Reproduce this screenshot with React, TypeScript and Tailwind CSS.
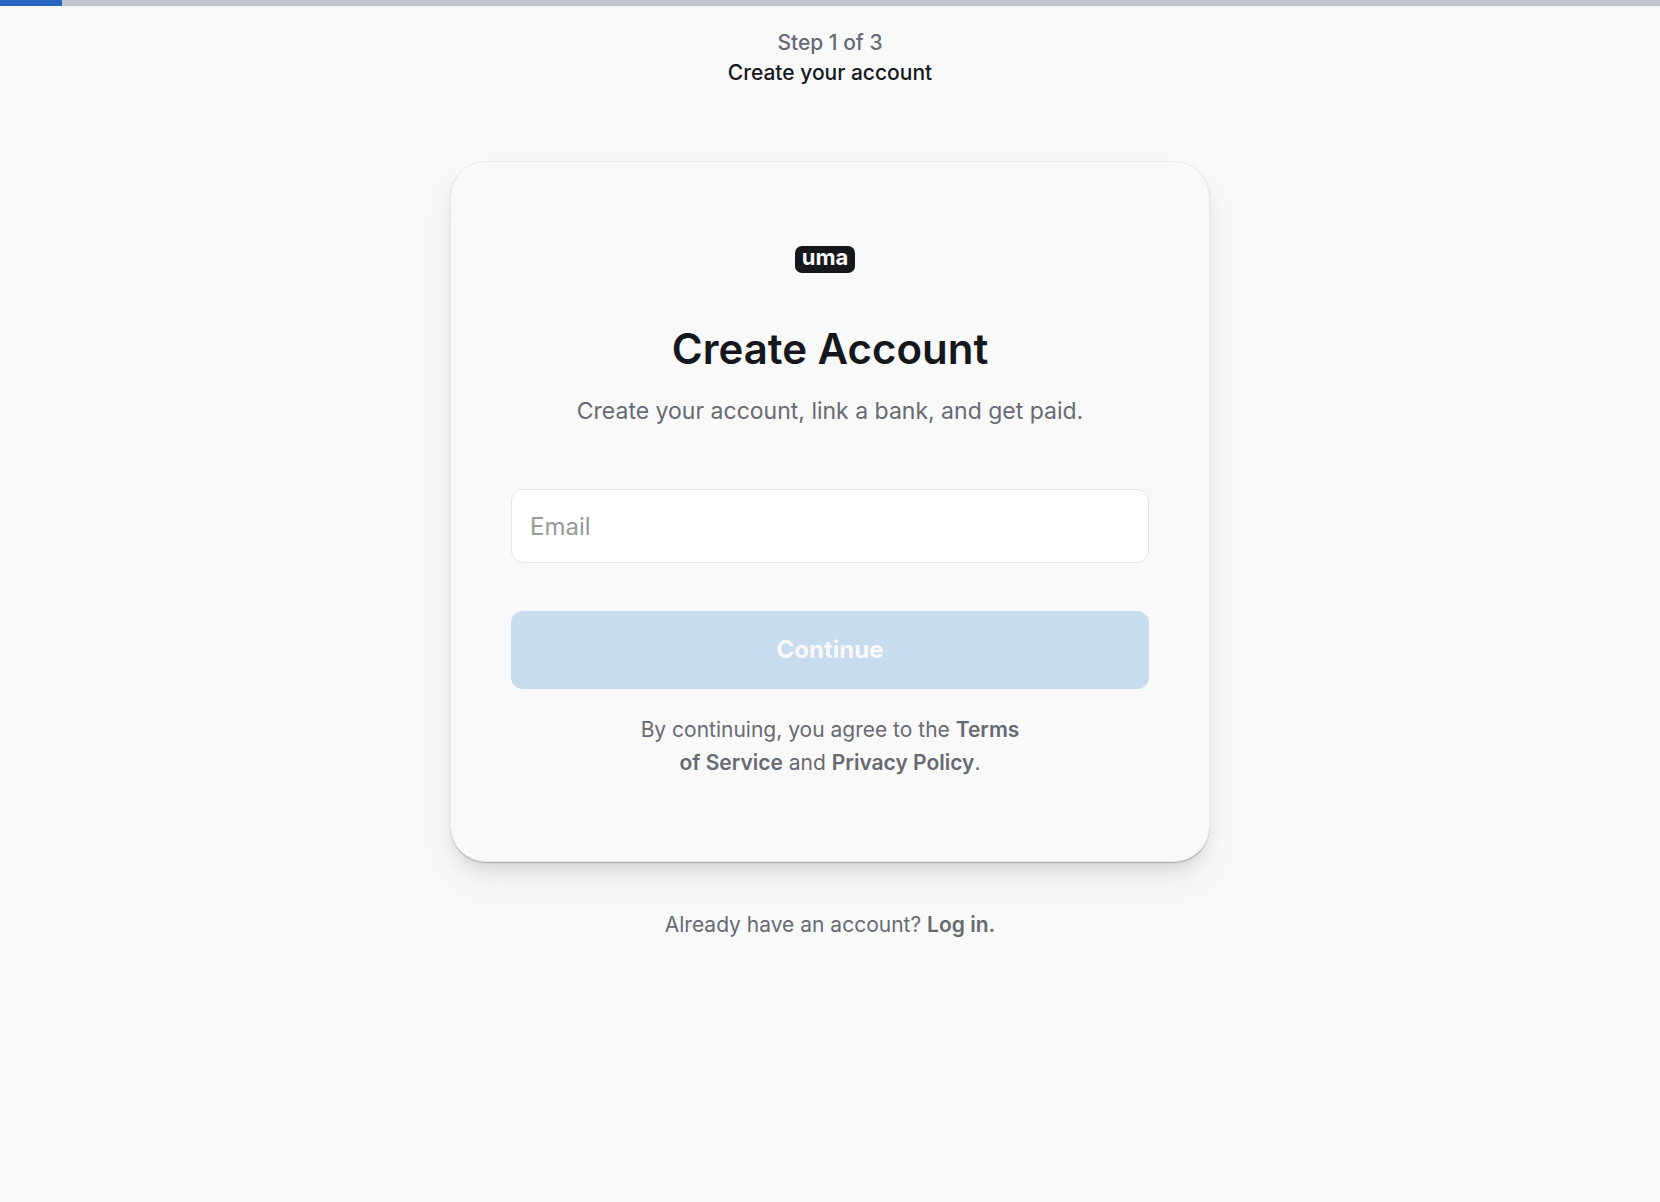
export default function App() {
  return (
    <div className="flex min-h-screen flex-col bg-[#f9f9f9] font-['Inter',sans-serif] text-[#686a72]">
      <div
        role="progressbar"
        aria-label="Sign-up progress"
        aria-valuenow={4}
        aria-valuemin={0}
        aria-valuemax={100}
        className="h-1.5 w-full bg-[#c0c5ce]"
      >
        <div className="h-full bg-[#2965c4]" style={{ width: '3.73%' }} />
      </div>
      <header className="mt-[22px] text-center text-[21px] leading-[30px] font-medium">
        <p>Step 1 of 3</p>
        <p className="text-[#16171c]">Create your account</p>
      </header>
      <main className="mt-[73px] flex flex-col items-center">
        <section className="flex w-full max-w-[760px] flex-col rounded-[36px] border border-[#ebebeb] bg-[#f9f9f9] px-[60px] pt-[84px] pb-[82px] text-center shadow-[0_1px_1px_rgba(0,0,0,0.22),0_12px_18px_-6px_rgba(0,0,0,0.12),0_18px_36px_rgba(0,0,0,0.05)]">
          <div className="mr-2.5 flex h-[27px] w-[60px] justify-center self-center rounded-[7px] bg-[#16171c] text-[22px] leading-[23px] font-bold text-[#f9f9f9]">
            uma
          </div>
          <h1 className="mt-12 text-[42px] leading-[56px] font-semibold text-[#16171c]">Create Account</h1>
          <p className="mt-4 text-[23px] leading-[36px]">Create your account, link a bank, and get paid.</p>
          <form className="mt-[60px] flex flex-col" onSubmit={(e) => e.preventDefault()}>
            <input
              type="email"
              aria-label="Email"
              placeholder="Email"
              className="h-[74px] w-full rounded-xl border border-[#e5e5e5] bg-white px-[18px] text-[24px] text-[#16171c] outline-none placeholder:text-[#999999]"
            />
            <button type="submit" disabled className="mt-12 h-[78px] rounded-xl bg-[#c8dcef] text-[24px] font-bold text-[#f9f9f9]">
              Continue
            </button>
          </form>
          <p className="mt-6 text-[21px] leading-[33px]">
            By continuing, you agree to the <a href="#terms" className="font-semibold">Terms<br />of Service</a> and{' '}
            <a href="#privacy" className="font-semibold">Privacy Policy</a>.
          </p>
        </section>
        <p className="mt-12 text-[21px] leading-[30px]">
          Already have an account? <a href="#login" className="font-semibold">Log in.</a>
        </p>
      </main>
    </div>
  );
}
